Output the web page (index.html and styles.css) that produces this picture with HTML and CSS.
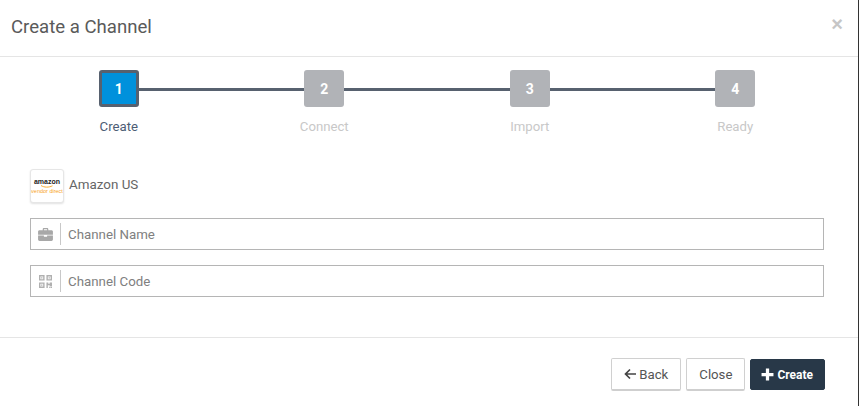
FILE: index.html
```html
<!DOCTYPE html>
<html lang="en">
<head>
<meta charset="utf-8">
<title>Create a Channel</title>
<link rel="stylesheet" href="styles.css">
</head>
<body>
<div class="modal">
  <header class="modal-header">
    <h1 class="modal-title">Create a Channel</h1>
    <span class="close-x">×</span>
  </header>
  <section class="modal-body">
    <div class="stepper">
      <div class="step active"><div class="step-box">1</div><div class="step-label">Create</div></div>
      <div class="step"><div class="step-box">2</div><div class="step-label">Connect</div></div>
      <div class="step"><div class="step-box">3</div><div class="step-label">Import</div></div>
      <div class="step"><div class="step-box">4</div><div class="step-label">Ready</div></div>
    </div>
    <div class="form">
      <div class="vendor">
        <div class="logo">
          <span class="logo-amazon">amazon</span>
          <svg class="logo-smile" viewBox="0 0 14 3" width="14" height="3"><path d="M1 .5 C4 2.6 9 2.6 12.5 .8" fill="none" stroke="#f7a21b" stroke-width="0.9"/></svg>
          <span class="logo-vendor">vendor direct</span>
        </div>
        <span class="vendor-name">Amazon US</span>
      </div>
      <div class="field">
        <span class="field-icon">
          <svg viewBox="0 0 16 14" width="15" height="13"><path fill="#a8a8a8" d="M5 1.2C5 .5 5.5 0 6.2 0h3.6C10.500 0 11 .5 11 1.200V2.500h3.500c.8 0 1.500.7 1.500 1.500v3.200H0V4c0-.8.7-1.500 1.500-1.500H5zM6.300 1.300v1.200h3.400V1.300zM0 8h6.300v1.500h3.400V8H16v4.500c0 .8-.7 1.500-1.500 1.500h-13C.7 14 0 13.300 0 12.500z"/></svg>
        </span>
        <span class="field-text">Channel Name</span>
      </div>
      <div class="field">
        <span class="field-icon">
          <svg viewBox="0 0 14 14" width="13" height="13"><path fill="#b0b0b0" fill-rule="evenodd" d="M0 0h6v6H0zM1.500 1.500v3h3v-3zM8 0h6v6H8zM9.500 1.500v3h3v-3zM0 8h6v6H0zM1.500 9.500v3h3v-3zM2.300 2.300h1.400v1.400H2.300zM10.300 2.300h1.400v1.400h-1.400zM2.300 10.300h1.400v1.400H2.300zM8 8h2v1.500h1.500V8H14v4h-2.500v-1H9.500v3H8zM11 12.700h1.300V14H11zM12.700 12.700H14V14h-1.300z"/></svg>
        </span>
        <span class="field-text">Channel Code</span>
      </div>
    </div>
  </section>
  <footer class="modal-footer">
    <button class="btn">
      <svg class="btn-icon" viewBox="0 0 12 12" width="12" height="12"><path d="M6 1.500 1.500 6 6 10.500M2 6h10" fill="none" stroke="#444" stroke-width="1.700"/></svg>Back
    </button>
    <button class="btn">Close</button>
    <button class="btn btn-primary">
      <svg class="btn-icon" viewBox="0 0 12 12" width="13" height="13"><path d="M6 .5v11M.5 6h11" fill="none" stroke="#fff" stroke-width="3"/></svg>Create
    </button>
  </footer>
</div>
</body>
</html>
```

FILE: styles.css
```css
* { box-sizing: border-box; }
html, body { margin: 0; padding: 0; background: #fff; }
body { font-family: Roboto, "Liberation Sans", sans-serif; color: #666; }
.modal {
  width: 859px;
  height: 406px;
  border-right: 1px solid #333;
  background: #fff;
  display: flex;
  flex-direction: column;
}
.modal-header {
  height: 57px;
  flex: none;
  border-bottom: 1px solid #e5e5e5;
  display: flex;
  justify-content: space-between;
  align-items: flex-start;
  padding: 16px 15px 0 11px;
}
.modal-title { margin: 0; font-size: 18.600px; line-height: 22px; font-weight: 400; color: #5a5a5a; }
.close-x { font-size: 20px; line-height: 13px; font-weight: 700; color: #c6c6c6; margin-top: 2px; font-family: "Liberation Sans", sans-serif; }
.modal-body { flex: none; height: 281px; border-bottom: 1px solid #e5e5e5; }
.stepper {
  display: grid;
  grid-template-columns: repeat(4, 1fr);
  padding: 13px 20px 0 16px;
}
.step { position: relative; display: flex; flex-direction: column; align-items: center; }
.step::before {
  content: "";
  position: absolute;
  top: 18px;
  left: 50%;
  width: 100%;
  height: 3px;
  background: #57616f;
}
.step:last-child::before { display: none; }
.step-box {
  position: relative;
  width: 40px;
  height: 37px;
  border-radius: 3px;
  background: #b1b3b7;
  color: #fff;
  font-size: 14px;
  font-weight: 700;
  display: flex;
  align-items: center;
  justify-content: center;
}
.active .step-box { background: #0091dc; border: 3px solid #57616f; }
.step-label { margin-top: 12px; font-size: 13.200px; line-height: 15px; color: #c8c8c8; }
.active .step-label { color: #4d5d75; }
.form { padding: 35px 34px 0 30px; }
.vendor { display: flex; align-items: center; gap: 5px; height: 34px; }
.logo {
  width: 34px;
  height: 34px;
  border: 1px solid #e6e6e6;
  border-radius: 3px;
  box-shadow: 0 1px 2px rgba(0,0,0,.12);
  background: #fff;
  display: flex;
  flex-direction: column;
  align-items: center;
  justify-content: center;
  overflow: hidden;
}
.logo-amazon { font-size: 7px; line-height: 7px; font-weight: 700; color: #222; font-family: "Liberation Sans", sans-serif; }
.logo-smile { display: block; margin: 0; }
.logo-vendor { font-size: 5.500px; line-height: 6px; color: #f7a21b; white-space: nowrap; font-family: "Liberation Sans", sans-serif; }
.vendor-name { font-size: 13.400px; color: #666; position: relative; top: -1.500px; }
.field {
  height: 32px;
  border: 1px solid #b5b5b5;
  display: flex;
  align-items: center;
  margin-top: 15px;
}
.field-icon {
  width: 30px;
  height: 22px;
  border-right: 1px solid #c8c8c8;
  display: flex;
  align-items: center;
  justify-content: center;
  flex: none;
}
.field-text { padding-left: 7px; font-size: 13.300px; color: #808080; }
.modal-footer {
  flex: 1;
  display: flex;
  justify-content: flex-end;
  align-items: flex-start;
  gap: 5px;
  padding: 20px 33px 0 0;
}
.btn {
  height: 33px;
  padding: 0 12px;
  border: 1px solid #d0d0d0;
  border-bottom: 2px solid #cfcfcf;
  border-radius: 2px;
  background: #fff;
  color: #555;
  font: 400 13.200px Roboto, sans-serif;
  display: flex;
  align-items: center;
  gap: 3px;
}
.btn-primary {
  height: 31px;
  margin-top: 1px;
  background: #283848;
  border: 1px solid #283848;
  color: #fff;
  font-weight: 700;
  font-size: 12px;
  padding: 0 11px 0 10px;
}
```
